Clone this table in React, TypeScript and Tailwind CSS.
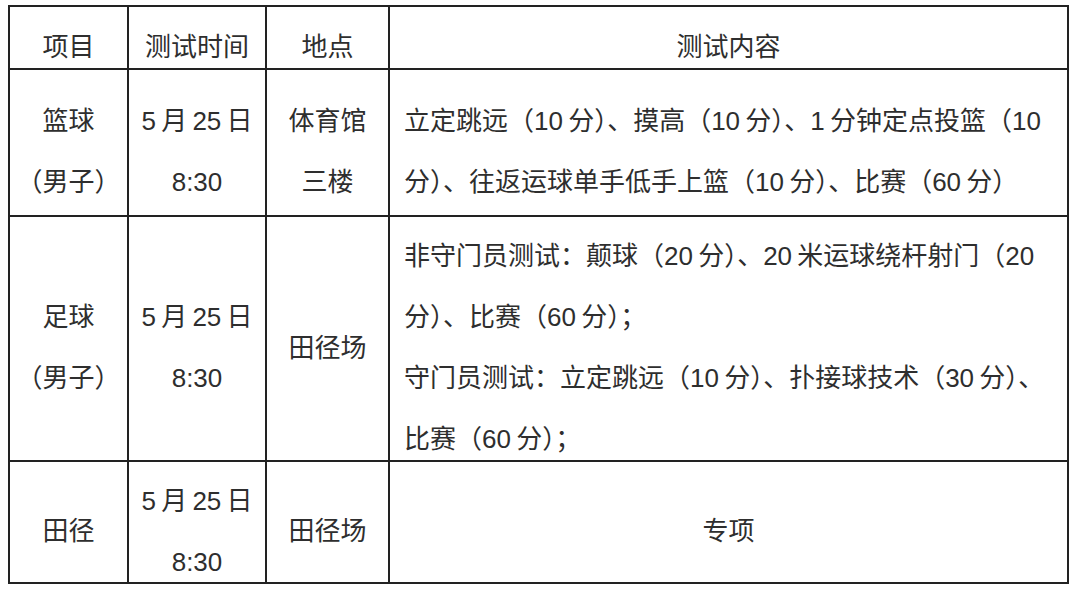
import React from "react";

const cell = "border-l-2 border-t-2 border-[#222] flex flex-col items-center justify-center pt-[18px] gap-[35px] leading-[26px] whitespace-nowrap";
const left = "border-l-2 border-t-2 border-[#222] flex flex-col items-start justify-center pt-[18px] pl-[14px] gap-[35px] leading-[26px] whitespace-nowrap";

export default function App() {
  return (
    <div className="w-[1080px] h-[596px] bg-white overflow-hidden">
      <div
        className="ml-[8px] mt-[5px] inline-grid grid-cols-[119px_138px_123px_679px] grid-rows-[63px_147px_245px_122px] border-r-2 border-b-2 border-[#222] text-[26px] text-[#2e2e2e] [word-spacing:-2px]"
        style={{ fontFamily: '"Liberation Sans", "Noto Sans CJK SC", sans-serif' }}
      >
        <div className={cell}><span>项目</span></div>
        <div className={cell}><span>测试时间</span></div>
        <div className={cell}><span>地点</span></div>
        <div className={cell}><span>测试内容</span></div>

        <div className={cell}><span>篮球</span><span>（男子）</span></div>
        <div className={cell}><span>5 月 25 日</span><span>8:30</span></div>
        <div className={cell}><span>体育馆</span><span>三楼</span></div>
        <div className={left}>
          <span>立定跳远（10 分）、摸高（10 分）、1 分钟定点投篮（10</span>
          <span>分）、往返运球单手低手上篮（10 分）、比赛（60 分）</span>
        </div>

        <div className={cell}><span>足球</span><span>（男子）</span></div>
        <div className={cell}><span>5 月 25 日</span><span>8:30</span></div>
        <div className={cell}><span>田径场</span></div>
        <div className={left}>
          <span>非守门员测试：颠球（20 分）、20 米运球绕杆射门（20</span>
          <span>分）、比赛（60 分）；</span>
          <span>守门员测试：立定跳远（10 分）、扑接球技术（30 分）、</span>
          <span>比赛（60 分）；</span>
        </div>

        <div className={cell}><span>田径</span></div>
        <div className={cell}><span>5 月 25 日</span><span>8:30</span></div>
        <div className={cell}><span>田径场</span></div>
        <div className={cell}><span>专项</span></div>
      </div>
    </div>
  );
}
